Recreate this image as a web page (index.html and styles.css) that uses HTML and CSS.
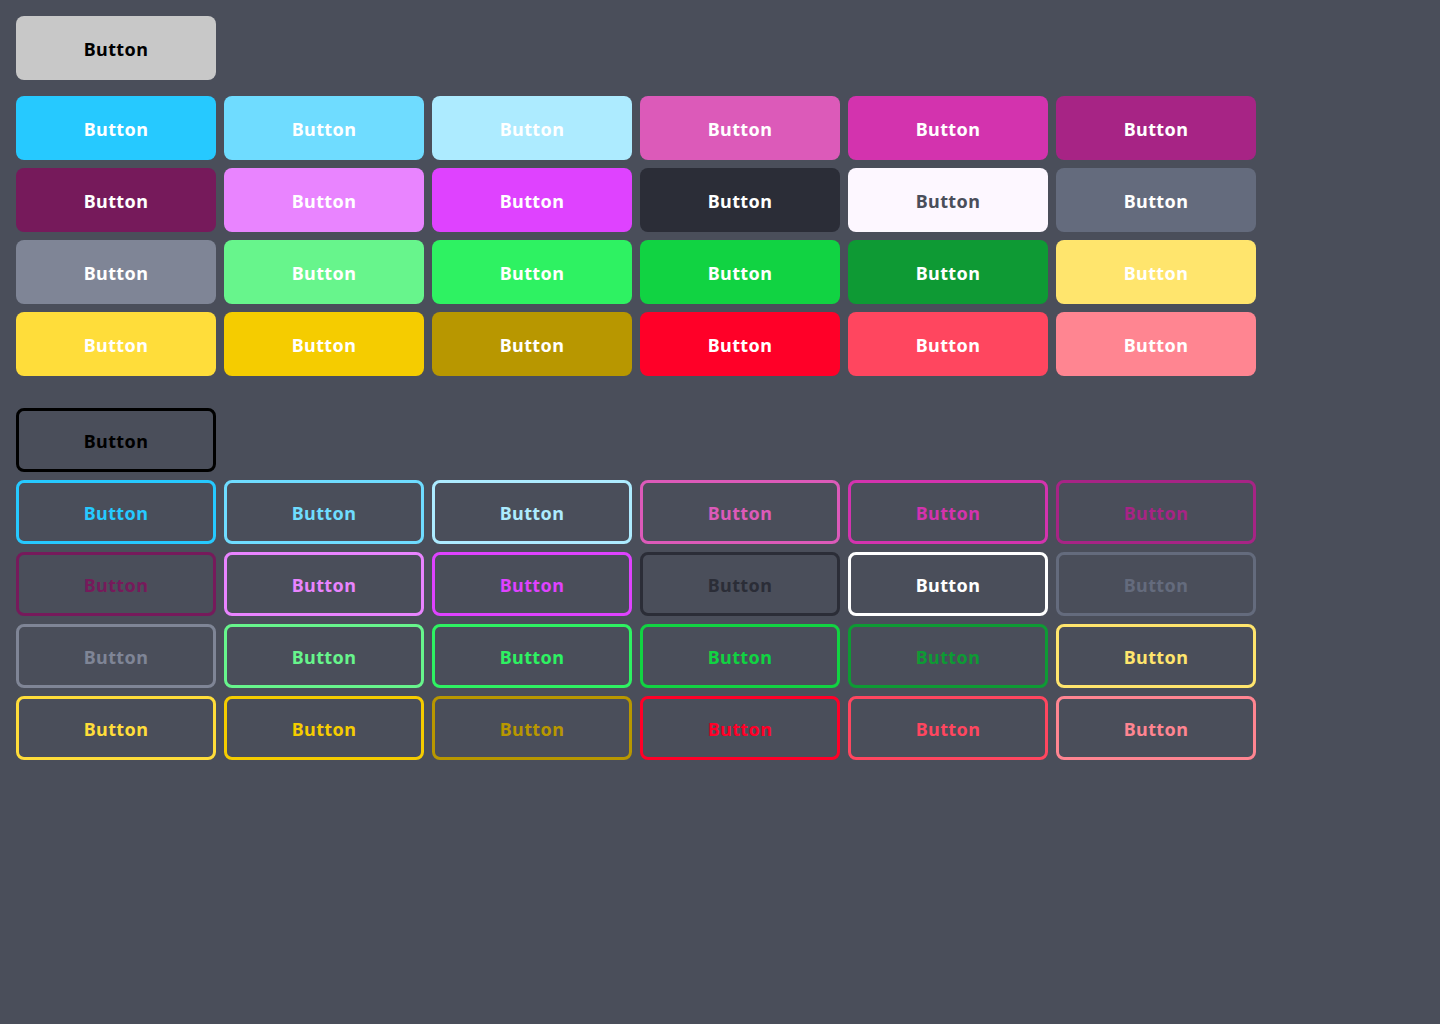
FILE: index.html
```html
<!DOCTYPE html>
<html>
<head>
<meta charset="utf-8">
<link rel="stylesheet" href="styles.css">
</head>
<body>
<div class="page">
  <section class="group group-solid">
    <div class="single"><button class="btn solid c-grey">Button</button></div>
    <div class="grid">
      <button class="btn solid c1">Button</button>
      <button class="btn solid c2">Button</button>
      <button class="btn solid c3">Button</button>
      <button class="btn solid c4">Button</button>
      <button class="btn solid c5">Button</button>
      <button class="btn solid c6">Button</button>
      <button class="btn solid c7">Button</button>
      <button class="btn solid c8">Button</button>
      <button class="btn solid c9">Button</button>
      <button class="btn solid c10">Button</button>
      <button class="btn solid c11 dark-text">Button</button>
      <button class="btn solid c12">Button</button>
      <button class="btn solid c13">Button</button>
      <button class="btn solid c14">Button</button>
      <button class="btn solid c15">Button</button>
      <button class="btn solid c16">Button</button>
      <button class="btn solid c17">Button</button>
      <button class="btn solid c18">Button</button>
      <button class="btn solid c19">Button</button>
      <button class="btn solid c20">Button</button>
      <button class="btn solid c21">Button</button>
      <button class="btn solid c22">Button</button>
      <button class="btn solid c23">Button</button>
      <button class="btn solid c24">Button</button>
    </div>
  </section>
  <section class="group group-outline">
    <div class="single"><button class="btn outline c-black">Button</button></div>
    <div class="grid">
      <button class="btn outline c1">Button</button>
      <button class="btn outline c2">Button</button>
      <button class="btn outline c3">Button</button>
      <button class="btn outline c4">Button</button>
      <button class="btn outline c5">Button</button>
      <button class="btn outline c6">Button</button>
      <button class="btn outline c7">Button</button>
      <button class="btn outline c8">Button</button>
      <button class="btn outline c9">Button</button>
      <button class="btn outline c10">Button</button>
      <button class="btn outline c11w">Button</button>
      <button class="btn outline c12">Button</button>
      <button class="btn outline c13">Button</button>
      <button class="btn outline c14">Button</button>
      <button class="btn outline c15">Button</button>
      <button class="btn outline c16">Button</button>
      <button class="btn outline c17">Button</button>
      <button class="btn outline c18">Button</button>
      <button class="btn outline c19">Button</button>
      <button class="btn outline c20">Button</button>
      <button class="btn outline c21">Button</button>
      <button class="btn outline c22">Button</button>
      <button class="btn outline c23">Button</button>
      <button class="btn outline c24">Button</button>
    </div>
  </section>
</div>
</body>
</html>
```
FILE: styles.css
```css
html, body {
  margin: 0;
  padding: 0;
  background: #4a4e5a;
  height: 100%;
}
.page {
  padding: 16px;
  display: flex;
  flex-direction: column;
  gap: 32px;
}
.group {
  display: flex;
  flex-direction: column;
}
.group-solid { gap: 16px; }
.group-outline { gap: 8px; }
.single {
  display: flex;
}
.grid {
  display: grid;
  grid-template-columns: repeat(6, 200px);
  gap: 8px;
}
.btn {
  width: 200px;
  height: 64px;
  border-radius: 8px;
  border: none;
  margin: 0;
  padding: 2px 0 0 0;
  font-family: "Noto Sans", "Open Sans", sans-serif;
  font-weight: 700;
  font-size: 18px;
  letter-spacing: 0.4px;
  display: flex;
  align-items: center;
  justify-content: center;
  color: #ffffff;
  background: transparent;
}
.solid { color: #ffffff; }
.solid.c-grey { background: #c8c8c8; color: #000000; }
.solid.c1 { background: #26c9ff; }
.solid.c2 { background: #6fdcff; }
.solid.c3 { background: #adebff; }
.solid.c4 { background: #dc5ab9; }
.solid.c5 { background: #d333ae; }
.solid.c6 { background: #a72485; }
.solid.c7 { background: #761a5b; }
.solid.c8 { background: #e984ff; }
.solid.c9 { background: #df42ff; }
.solid.c10 { background: #2b2d37; }
.solid.c11 { background: #fdf7ff; }
.solid.dark-text { color: #4a4e5a; }
.solid.c12 { background: #646b7d; }
.solid.c13 { background: #7f8596; }
.solid.c14 { background: #67f58c; }
.solid.c15 { background: #2ef262; }
.solid.c16 { background: #11d342; }
.solid.c17 { background: #0e9a34; }
.solid.c18 { background: #ffe56d; }
.solid.c19 { background: #ffdd3a; }
.solid.c20 { background: #f5cc00; }
.solid.c21 { background: #b89700; }
.solid.c22 { background: #ff0028; }
.solid.c23 { background: #ff465f; }
.solid.c24 { background: #ff8591; }

.outline { border: 3px solid currentColor; }
.outline.c-black { color: #000000; }
.outline.c1 { color: #26c9ff; }
.outline.c2 { color: #6fdcff; }
.outline.c3 { color: #adebff; }
.outline.c4 { color: #dc5ab9; }
.outline.c5 { color: #d333ae; }
.outline.c6 { color: #a72485; }
.outline.c7 { color: #761a5b; }
.outline.c8 { color: #e984ff; }
.outline.c9 { color: #df42ff; }
.outline.c10 { color: #2b2d37; }
.outline.c11w { color: #ffffff; }
.outline.c12 { color: #646b7d; }
.outline.c13 { color: #7f8596; }
.outline.c14 { color: #67f58c; }
.outline.c15 { color: #2ef262; }
.outline.c16 { color: #11d342; }
.outline.c17 { color: #0e9a34; }
.outline.c18 { color: #ffe56d; }
.outline.c19 { color: #ffdd3a; }
.outline.c20 { color: #f5cc00; }
.outline.c21 { color: #b89700; }
.outline.c22 { color: #ff0028; }
.outline.c23 { color: #ff465f; }
.outline.c24 { color: #ff8591; }
```
